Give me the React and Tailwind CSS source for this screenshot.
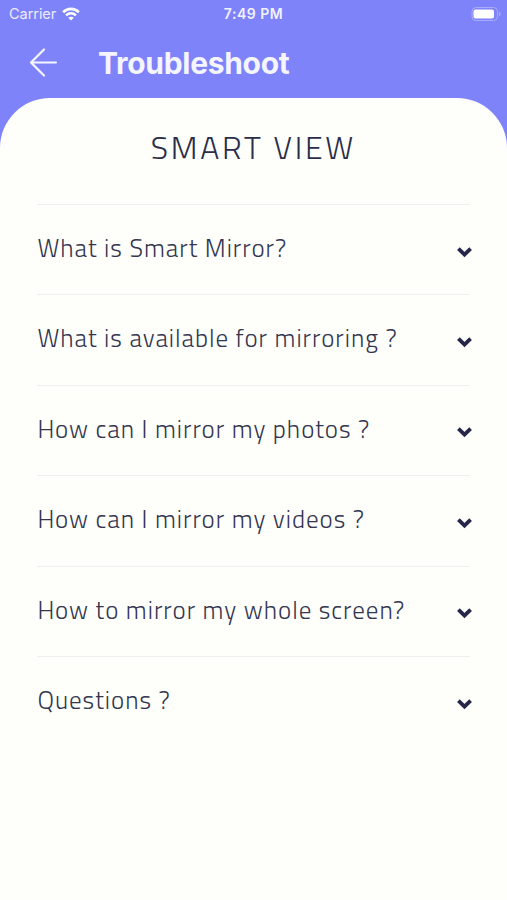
import React, { useState } from 'react';

const questions = [
  'What is Smart Mirror?',
  'What is available for mirroring ?',
  'How can I mirror my photos ?',
  'How can I mirror my videos ?',
  'How to mirror my whole screen?',
  'Questions ?'
];

const WifiIcon = () => (
  <svg className="ml-[6px] h-[14px] w-[18px]" viewBox="0 0 19 14" preserveAspectRatio="none" fill="none" stroke="#fff">
    <path d="M1.2 5.2C5.8 0.7 13.2 0.7 17.8 5.2" strokeWidth="2.7" />
    <path d="M4.3 8.3C7.2 5.5 11.8 5.5 14.7 8.3" strokeWidth="2.5" />
    <path d="M9.5 13.4L6.6 10.8C8.2 9.3 10.8 9.3 12.4 10.8Z" fill="#fff" stroke="none" />
  </svg>
);

const BatteryIcon = () => (
  <svg className="h-[14px] w-[31px]" viewBox="0 0 31 14" fill="none">
    <rect x="1" y="0.5" width="25.5" height="13" rx="4" stroke="#a9acfc" />
    <rect x="2.5" y="2.5" width="20.5" height="9" rx="2" fill="#fff" />
    <path d="M28 4.7C30.1 5.3 30.1 8.7 28 9.3Z" fill="#a9acfc" />
  </svg>
);

const StatusBar = () => (
  <div className="grid h-[27px] grid-cols-3 items-center font-['Inter',sans-serif] text-white">
    <div className="flex items-center pl-[9px]">
      <span className="text-[14.5px] tracking-[-0.05px] opacity-85">Carrier</span>
      <WifiIcon />
    </div>
    <span className="text-center text-[14px] font-semibold tracking-[0.5px] opacity-90">7:49 PM</span>
    <div className="flex justify-end pr-[5px]">
      <BatteryIcon />
    </div>
  </div>
);

const QuestionRow = ({ text, open, onToggle }) => (
  <button
    onClick={onToggle}
    aria-expanded={open}
    className="flex h-[90.4px] w-full items-center justify-between border-t border-[#eeefef] text-left"
  >
    <span className="whitespace-nowrap pb-[2px] text-[25px] font-light tracking-[0.98px] text-[#343650]">{text}</span>
    <svg className="-mr-[3px] mt-1 h-[12px] w-[17px] shrink-0" viewBox="0 0 17 12" fill="none" stroke="#25264a">
      <path d="M2.4 2.6L8.5 8.6L14.6 2.6" strokeWidth="3.8" />
    </svg>
  </button>
);

const App = () => {
  const [openIndex, setOpenIndex] = useState(null);

  return (
    <div className="h-[900px] w-[507px] overflow-hidden bg-[#7f83fa]">
      <StatusBar />

      {/* Header */}
      <header className="flex h-[71px] items-center pl-[29px]">
        <button aria-label="Back">
          <svg className="h-[29px] w-[29px]" viewBox="0 0 29 29" fill="none" stroke="#f4f5ff" strokeWidth="2.2" strokeLinecap="round" strokeLinejoin="round">
            <path d="M27 14.5H2M15 1.5L2 14.5L15 27.5" />
          </svg>
        </button>
        <h1 className="ml-[40px] pt-[2px] font-['Inter',sans-serif] text-[30px] font-bold tracking-[-0.3px] text-[#f4f5ff]">
          Troubleshoot
        </h1>
      </header>

      <main className="h-[802px] rounded-t-[50px] bg-[#fefffb] pr-[36.6px] pl-[37.4px] font-['Titillium_Web','Roboto',sans-serif]">
        <h2 className="flex h-[106px] items-center justify-center pr-[1px] pb-[8px] text-[32px] font-light tracking-[2.75px] text-[#2b2d49]">
          SMART VIEW
        </h2>
        {questions.map((text, index) => (
          <QuestionRow
            key={text}
            text={text}
            open={openIndex === index}
            onToggle={() => setOpenIndex(openIndex === index ? null : index)}
          />
        ))}
      </main>
    </div>
  );
};

export default App;
